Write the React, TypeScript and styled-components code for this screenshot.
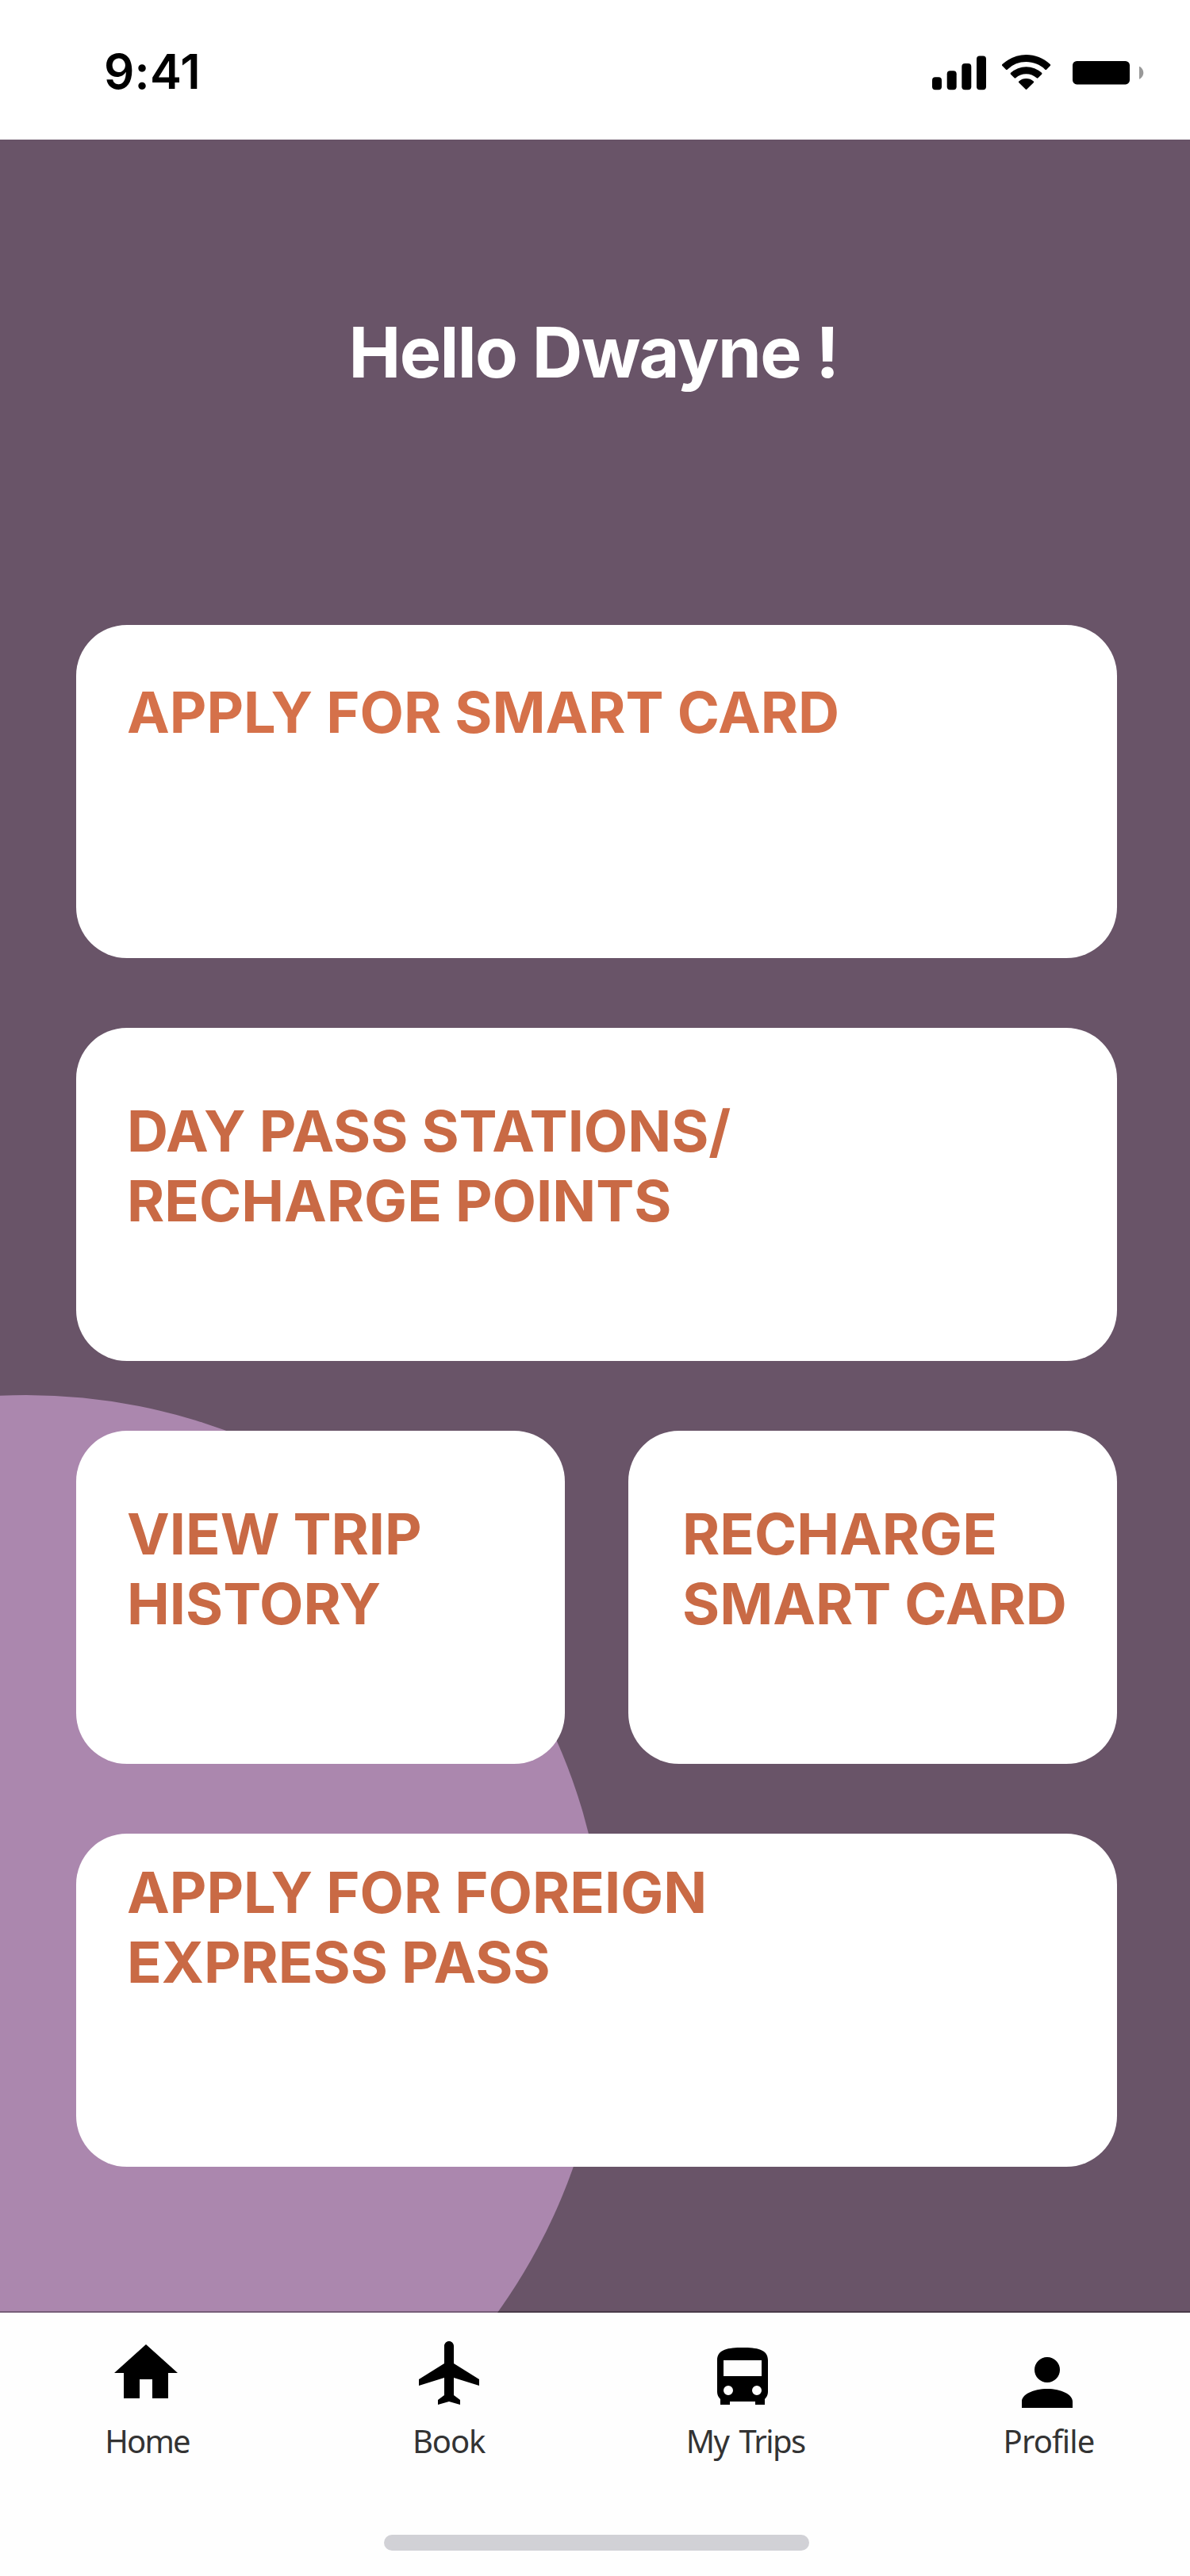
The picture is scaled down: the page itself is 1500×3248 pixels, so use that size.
import React from "react";
import styled, { createGlobalStyle } from "styled-components";

const GlobalStyle = createGlobalStyle`
  *, *::before, *::after { box-sizing: border-box; }
  html, body { margin: 0; padding: 0; background: #ffffff; }
  h1, h2 { margin: 0; }
`;

const Screen = styled.div`
  display: flex;
  flex-direction: column;
  width: 1500px;
  height: 3248px;
  background: #ffffff;
  overflow: hidden;
  font-family: Inter, "Liberation Sans", sans-serif;
`;

const StatusBar = styled.header`
  display: flex;
  justify-content: space-between;
  align-items: flex-start;
  height: 176px;
  padding: 54px 58px 0 131px;
`;

const Time = styled.span`
  font-size: 60px;
  font-weight: 600;
  line-height: 72px;
  letter-spacing: 0.2px;
  color: #000000;
`;

const StatusIcons = styled.div`
  display: flex;
  align-items: flex-start;
  padding-top: 15px;
`;

const SignalIcon = styled.svg`
  width: 69px;
  height: 45px;
  margin-right: 19px;
`;

const WifiIcon = styled.svg`
  width: 62px;
  height: 45px;
  margin-right: 27px;
`;

const BatteryIcon = styled.svg`
  width: 90px;
  height: 45px;
`;

const Main = styled.main`
  position: relative;
  display: flex;
  flex-direction: column;
  height: 2740px;
  padding: 216px 92px 0 96px;
  background: #695468;
  overflow: hidden;
`;

const Blob = styled.div`
  position: absolute;
  left: -698px;
  top: 1582.5px;
  width: 1462px;
  height: 1462px;
  border-radius: 50%;
  background: #ab87ae;
`;

const Greeting = styled.h1`
  position: relative;
  height: 104px;
  margin: 0 8px 292px 0;
  text-align: center;
  font-size: 88px;
  font-weight: 700;
  line-height: 104px;
  letter-spacing: -1.6px;
  color: #ffffff;
`;

const Cards = styled.div`
  position: relative;
  display: grid;
  grid-template-columns: 1fr 1fr;
  grid-auto-rows: 420px;
  column-gap: 80px;
  row-gap: 88px;
`;

const Card = styled.section<{ $wide?: boolean; $top: number; $left?: number }>`
  grid-column: ${(p) => (p.$wide ? "1 / -1" : "auto")};
  padding: ${(p) => p.$top}px 0 0 ${(p) => p.$left ?? 64}px;
  border-radius: 64px;
  background: #ffffff;
`;

const CardTitle = styled.h2<{ $bright?: boolean }>`
  font-size: 72px;
  font-weight: 700;
  line-height: 88px;
  white-space: nowrap;
  color: ${(p) => (p.$bright ? "#d5714a" : "#c96a45")};
`;

const Footer = styled.footer`
  position: relative;
  display: flex;
  flex-direction: column;
  align-items: center;
  height: 332px;
  background: #fefefe;
  box-shadow: 0 -2px 0 rgba(0, 0, 0, 0.3);
`;

const Tabs = styled.nav`
  display: flex;
  justify-content: space-between;
  width: 100%;
  height: 280px;
  padding: 28px 77px 0 87px;
`;

const Tab = styled.div`
  display: flex;
  flex-direction: column;
  align-items: center;
  width: 200px;
`;

const TabIcon = styled.svg<{ $shift: number }>`
  width: 96px;
  height: 96px;
  margin-left: ${(p) => p.$shift}px;
  fill: #000000;
`;

const TabLabel = styled.span<{ $spacing: number; $shift: number }>`
  margin-top: 10px;
  margin-left: ${(p) => p.$shift}px;
  font-family: "Noto Sans", "Open Sans", sans-serif;
  font-size: 40px;
  line-height: 56px;
  letter-spacing: ${(p) => p.$spacing}px;
  word-spacing: 4px;
  white-space: nowrap;
  color: #333333;
`;

const HomeIndicator = styled.div`
  width: 536px;
  height: 20px;
  margin-left: 4px;
  border-radius: 10px;
  background: #d1d1d6;
`;

const tabs = [
  {
    label: "Home",
    iconShift: -6,
    labelShift: -3,
    spacing: -1.8,
    path: "M10 20v-6h4v6h5v-8h3L12 3 2 12h3v8z",
  },
  {
    label: "Book",
    iconShift: 4.6,
    labelShift: 0,
    spacing: -1.1,
    path: "M21 16v-2l-8-5V3.5c0-.83-.67-1.5-1.5-1.5S10 2.67 10 3.5V9l-8 5v2l8-2.5V19l-2 1.5V22l3.5-1 3.5 1v-1.5L13 19v-5.5l8 2.5z",
  },
  {
    label: "My Trips",
    iconShift: -16.6,
    labelShift: -9,
    spacing: -1.5,
    path: "M4 18c0 .88.39 1.67 1 2.22V22h3v-1h8v1h3v-1.78c.61-.55 1-1.34 1-2.22V8c0-3.5-3.58-4-8-4s-8 .5-8 4zm3.5 1a1.5 1.5 0 1 1 0-3 1.5 1.5 0 0 1 0 3zm9 0a1.5 1.5 0 1 1 0-3 1.5 1.5 0 0 1 0 3zM18 13H6V8h12z",
  },
  {
    label: "Profile",
    iconShift: -6,
    labelShift: -2,
    spacing: -0.9,
    path: "M12 7a4 4 0 1 1 0 8 4 4 0 0 1 0-8zM4 23v-2c0-2.21 3.58-4 8-4s8 1.79 8 4v2z",
  },
];

export default function App() {
  return (
    <>
      <GlobalStyle />
      <Screen>
        <StatusBar>
          <Time>9:41</Time>
          <StatusIcons>
            <SignalIcon viewBox="0 0 69 45">
              <rect x="0" y="28.3" width="12" height="16" rx="4" />
              <rect x="18.7" y="20.3" width="12" height="24" rx="4" />
              <rect x="37.3" y="11" width="12" height="33.3" rx="4" />
              <rect x="56" y="1.6" width="12" height="42.7" rx="4" />
            </SignalIcon>
            <WifiIcon viewBox="0 0 15.5 11.25">
              <path d="M7.64 2.28c2.21 0 4.35.85 5.95 2.38.12.12.31.12.43 0l1.16-1.17a.32.32 0 0 0 0-.46C10.96-1.01 4.31-1.01.1 3.03a.32.32 0 0 0 0 .46l1.16 1.17c.12.12.31.12.43 0A8.63 8.63 0 0 1 7.64 2.28z" />
              <path d="M7.64 6.07c1.21 0 2.39.46 3.29 1.27.12.12.31.12.43 0l1.16-1.17a.32.32 0 0 0 0-.46 7.15 7.15 0 0 0-9.76 0 .32.32 0 0 0 0 .46l1.15 1.17c.12.12.31.12.43 0a4.92 4.92 0 0 1 3.3-1.27z" />
              <path d="M9.95 8.81a.32.32 0 0 0 0-.46 3.57 3.57 0 0 0-4.62 0 .32.32 0 0 0 0 .46l2.1 2.07c.12.12.3.12.42 0z" />
            </WifiIcon>
            <BatteryIcon viewBox="0 0 90 45">
              <rect x="0" y="8" width="72" height="29.4" rx="5.3" />
              <path d="M84 14.7v16c3.2-1.35 5.3-4.5 5.3-8s-2.1-6.65-5.3-8z" fill="#999999" />
            </BatteryIcon>
          </StatusIcons>
        </StatusBar>

        <Main>
          <Blob />
          <Greeting>Hello Dwayne !</Greeting>
          <Cards>
            <Card $wide $top={66}>
              <CardTitle $bright>APPLY FOR SMART CARD</CardTitle>
            </Card>
            <Card $wide $top={86}>
              <CardTitle>
                DAY PASS STATIONS/
                <br />
                RECHARGE POINTS
              </CardTitle>
            </Card>
            <Card $top={86}>
              <CardTitle>
                VIEW TRIP
                <br />
                HISTORY
              </CardTitle>
            </Card>
            <Card $top={86} $left={68}>
              <CardTitle>
                RECHARGE
                <br />
                SMART CARD
              </CardTitle>
            </Card>
            <Card $wide $top={30}>
              <CardTitle>
                APPLY FOR FOREIGN
                <br />
                EXPRESS PASS
              </CardTitle>
            </Card>
          </Cards>
        </Main>

        <Footer>
          <Tabs>
            {tabs.map((tab) => (
              <Tab key={tab.label}>
                <TabIcon viewBox="0 0 24 24" $shift={tab.iconShift}>
                  <path d={tab.path} fillRule="evenodd" />
                </TabIcon>
                <TabLabel $spacing={tab.spacing} $shift={tab.labelShift}>
                  {tab.label}
                </TabLabel>
              </Tab>
            ))}
          </Tabs>
          <HomeIndicator />
        </Footer>
      </Screen>
    </>
  );
}
